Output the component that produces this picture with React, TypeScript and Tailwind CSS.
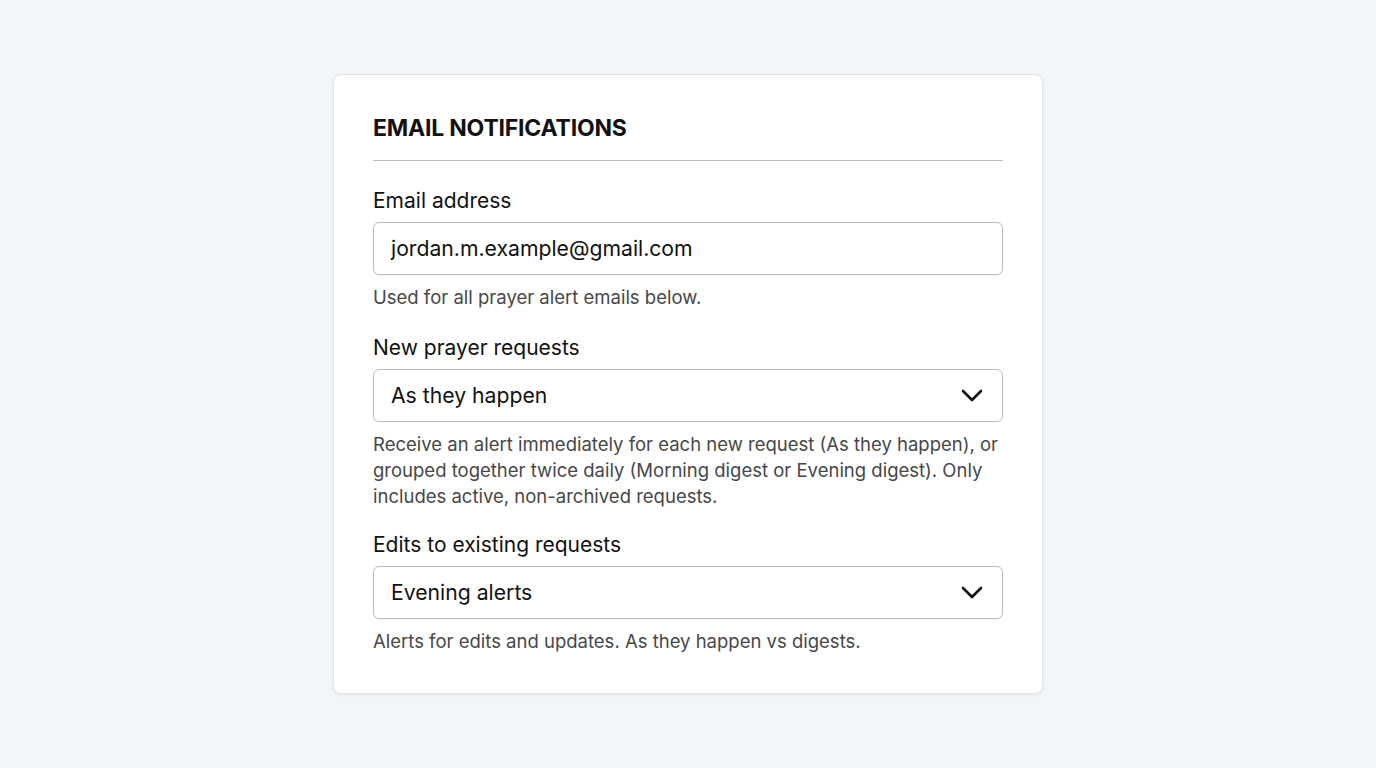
type SelectFieldProps = {
  label: string;
  value: string;
  help: string;
};

function Chevron() {
  return (
    <svg width="22" height="15" viewBox="0 0 22 15" fill="none" className="shrink-0">
      <path d="M2 3L11 12L20 3" stroke="#111" strokeWidth="2.6" strokeLinecap="round" strokeLinejoin="round" />
    </svg>
  );
}

function SelectField({ label, value, help }: SelectFieldProps) {
  return (
    <div className="flex flex-col">
      <label className="text-[21px] leading-[30px] text-[#111]">{label}</label>
      <div className="mt-[6px] flex h-[53px] items-center justify-between rounded-[6px] border border-[#b7bec3] bg-white pl-[17px] pr-[19px] shadow-[0_1px_1px_rgba(0,0,0,0.04)]">
        <span className="text-[21.2px] text-[#111]">{value}</span>
        <Chevron />
      </div>
      <p className="mt-[9px] text-[18.5px] leading-[26px] text-[#474747]">{help}</p>
    </div>
  );
}

export default function App() {
  return (
    <main
      className="flex min-h-screen justify-center bg-[#f3f6f8] pt-[74px]"
      style={{ fontFamily: "Inter, 'Noto Sans', sans-serif" }}
    >
      <section className="h-fit w-[710px] rounded-[8px] border border-[#e1e5e8] bg-white px-[39px] pb-[39px] pt-[39px] shadow-[0_1px_3px_rgba(0,0,0,0.08)]">
        <h1 className="border-b border-[#b9bfc4] pb-[18px] text-[23px] font-bold leading-[28px] tracking-[-0.2px] text-[#111]">
          EMAIL NOTIFICATIONS
        </h1>

        <div className="mt-[25px] flex flex-col">
          <label className="text-[21px] leading-[30px] text-[#111]">Email address</label>
          <div className="mt-[6px] flex h-[53px] items-center rounded-[6px] border border-[#b7bec3] bg-white pl-[17px] shadow-[0_1px_1px_rgba(0,0,0,0.04)]">
            <span className="text-[21.2px] text-[#111]">jordan.m.example@gmail.com</span>
          </div>
          <p className="mt-[9px] text-[18.5px] leading-[26px] text-[#474747]">
            Used for all prayer alert emails below.
          </p>
        </div>

        <div className="mt-[23px]">
          <SelectField
            label="New prayer requests"
            value="As they happen"
            help="Receive an alert immediately for each new request (As they happen), or grouped together twice daily (Morning digest or Evening digest). Only includes active, non-archived requests."
          />
        </div>

        <div className="mt-[21px]">
          <SelectField
            label="Edits to existing requests"
            value="Evening alerts"
            help="Alerts for edits and updates. As they happen vs digests."
          />
        </div>
      </section>
    </main>
  );
}
